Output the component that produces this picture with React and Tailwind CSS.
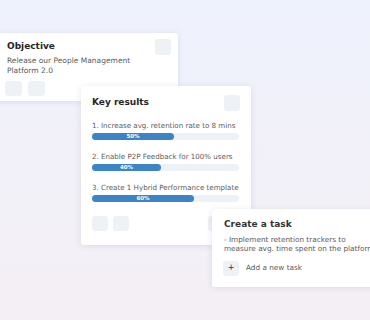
const font = { fontFamily: '"DejaVu Sans", "Open Sans", sans-serif' };

const keyResults = [
  { label: '1. Increase avg. retention rate to 8 mins', pct: '50%', fill: 'w-[82px]' },
  { label: '2. Enable P2P Feedback for 100% users', pct: '40%', fill: 'w-[69px]' },
  { label: '3. Create 1 Hybrid Performance template', pct: '60%', fill: 'w-[102px]' },
];

function Chip({ className = '' }) {
  return <div className={`rounded-[3px] bg-[#eef1f6] ${className}`} />;
}

export default function App() {
  return (
    <div
      className="relative h-[320px] w-[370px] overflow-hidden bg-gradient-to-b from-[#eef2fc] to-[#f5eff5] text-[#5b5b5b]"
      style={font}
    >
      {/* Objective */}
      <div className="absolute left-[-8px] top-[33px] h-[68px] w-[186px] rounded-[3px] bg-white shadow-[0_1px_6px_rgba(120,130,160,0.18)]">
        <div className="flex items-start justify-between pl-[15px] pr-[7px] pt-[6px]">
          <span className="mt-[1px] text-[9px] font-bold text-[#262626]">Objective</span>
          <Chip className="h-[16px] w-[16px]" />
        </div>
        <p className="mt-[1px] pl-[15px] text-[7.5px] leading-[9.5px]">
          Release our People Management
          <br />
          Platform 2.0
        </p>
        <div className="mt-[6px] flex gap-[6px] pl-[13px]">
          <Chip className="h-[15px] w-[17px]" />
          <Chip className="h-[15px] w-[17px]" />
        </div>
      </div>

      {/* Key results */}
      <div className="absolute left-[81px] top-[86px] h-[159px] w-[170px] rounded-[3px] bg-white shadow-[0_1px_6px_rgba(120,130,160,0.2)]">
        <div className="flex items-start justify-between px-[11px] pt-[9px]">
          <span className="mt-[1px] text-[9px] font-bold text-[#262626]">Key results</span>
          <Chip className="h-[16px] w-[16px]" />
        </div>
        <div className="mt-[10px] flex flex-col gap-[12px] px-[11px]">
          {keyResults.map((k) => (
            <div key={k.label} className="flex flex-col gap-[2px]">
              <span className="whitespace-nowrap text-[7.1px] leading-[10px]">{k.label}</span>
              <div className="h-[7px] w-[147px] rounded-full bg-[#eef2f7]">
                <div
                  className={`flex h-[7px] items-center justify-center rounded-full bg-[#3d84c6] text-[5.5px] font-bold leading-none text-white ${k.fill}`}
                >
                  {k.pct}
                </div>
              </div>
            </div>
          ))}
        </div>
        <div className="mt-[14px] flex items-center gap-[5px] px-[11px]">
          <Chip className="h-[15px] w-[16px]" />
          <Chip className="h-[15px] w-[16px]" />
          <Chip className="ml-auto h-[15px] w-[32px]" />
        </div>
      </div>

      {/* Create a task */}
      <div className="absolute left-[212px] top-[209px] h-[78px] w-[175px] rounded-[3px] bg-white shadow-[0_1px_6px_rgba(120,130,160,0.2)]">
        <div className="pl-[12px] pt-[9px] text-[9px] font-bold text-[#333]">Create a task</div>
        <p className="mt-[3px] whitespace-nowrap pl-[12px] text-[7.3px] leading-[9.5px]">
          - Implement retention trackers to
          <br />
          measure avg. time spent on the platform
        </p>
        <div className="mt-[7px] flex items-center gap-[7px] pl-[11px]">
          <div className="flex h-[15px] w-[16px] items-center justify-center rounded-[3px] bg-[#eef1f6] text-[8px] leading-none text-[#333]">
            +
          </div>
          <span className="text-[7.3px]">Add a new task</span>
        </div>
      </div>
    </div>
  );
}
